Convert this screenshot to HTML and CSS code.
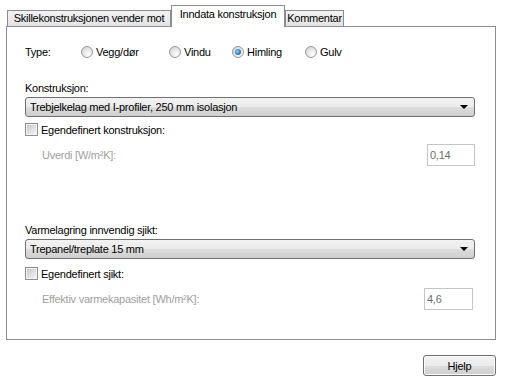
FILE: index.html
```html
<!DOCTYPE html>
<html lang="no">
<head>
    <meta charset="UTF-8">
    <title>Inndata konstruksjon</title>
    <link rel="stylesheet" href="styles.css">
</head>
<body>
    <div class="window">
        <!-- Faner -->
        <div class="tabs">
            <div class="tab tab-first">Skillekonstruksjonen vender mot</div>
            <div class="tab tab-active">Inndata konstruksjon</div>
            <div class="tab tab-last">Kommentar</div>
        </div>

        <div class="panel">
            <!-- Type -->
            <div class="type-row">
                <span class="type-label">Type:</span>
                <label class="radio r-vegg"><span class="radio-dot"></span>Vegg/dør</label>
                <label class="radio r-vindu"><span class="radio-dot"></span>Vindu</label>
                <label class="radio r-himling"><span class="radio-dot checked"></span>Himling</label>
                <label class="radio r-gulv"><span class="radio-dot"></span>Gulv</label>
            </div>

            <!-- Konstruksjon -->
            <div class="field-label first-label">Konstruksjon:</div>
            <div class="combo">
                <span>Trebjelkelag med I-profiler, 250 mm isolasjon</span>
                <span class="combo-arrow"></span>
            </div>
            <label class="check"><span class="check-box"></span>Egendefinert konstruksjon:</label>
            <div class="value-row">
                <span class="disabled-label">Uverdi [W/m²K]:</span>
                <span class="value-box value-u">0,14</span>
            </div>

            <!-- Varmelagring -->
            <div class="field-label second-label">Varmelagring innvendig sjikt:</div>
            <div class="combo">
                <span>Trepanel/treplate 15 mm</span>
                <span class="combo-arrow"></span>
            </div>
            <label class="check check-second"><span class="check-box"></span>Egendefinert sjikt:</label>
            <div class="value-row value-row-second">
                <span class="disabled-label">Effektiv varmekapasitet [Wh/m²K]:</span>
                <span class="value-box value-c">4,6</span>
            </div>
        </div>

        <div class="buttons">
            <button class="btn">Hjelp</button>
        </div>
    </div>
</body>
</html>
```

FILE: styles.css
```css
body {
    margin: 0;
    background-color: #ffffff;
    font-family: "Liberation Sans", Arial, sans-serif;
    font-size: 11px;
    letter-spacing: -0.25px;
    color: #000;
}
.window {
    padding: 5px 10px 0 6px;
    width: 490px;
}
.tabs {
    display: flex;
    align-items: flex-end;
    height: 21px;
    padding-left: 1px;
}
.tab {
    box-sizing: border-box;
    height: 16px;
    border: 1px solid #898c95;
    border-bottom: none;
    background: linear-gradient(#f3f3f3, #e3e3e3);
    text-align: center;
    line-height: 15px;
    white-space: nowrap;
}
.tab-first {
    width: 164px;
}
.tab-active {
    position: relative;
    z-index: 1;
    width: 114px;
    height: 22px;
    margin-bottom: -1px;
    background: #ffffff;
    line-height: 17px;
}
.tab-last {
    width: 59px;
}
.panel {
    box-sizing: border-box;
    height: 314px;
    border: 1px solid #898c95;
    padding: 18px 20px 0 18px;
    background: #ffffff;
}
.type-row {
    display: flex;
    align-items: center;
    height: 14px;
}
.type-label {
    width: 56px;
}
.radio {
    display: flex;
    align-items: center;
}
.r-vegg { width: 88px; }
.r-vindu { width: 63px; }
.r-himling { width: 73px; }
.radio-dot {
    box-sizing: border-box;
    width: 12px;
    height: 12px;
    margin-right: 3px;
    border-radius: 50%;
    border: 1px solid #9a9a9a;
    background: radial-gradient(circle at 65% 70%, #fafafa 10%, #d6d6d6 80%);
    display: flex;
    align-items: center;
    justify-content: center;
}
.radio-dot.checked::after {
    content: "";
    width: 6px;
    height: 6px;
    border-radius: 50%;
    background: radial-gradient(circle at 40% 40%, #8ad6ff 0%, #2d7fc4 55%, #163f73 100%);
}
.field-label {
    height: 13px;
    line-height: 13px;
}
.first-label {
    margin-top: 23px;
}
.second-label {
    margin-top: 58px;
}
.combo {
    box-sizing: border-box;
    height: 20px;
    margin-top: 2px;
    border: 1px solid #707070;
    border-radius: 3px;
    background: linear-gradient(#f2f2f2 0%, #ebebeb 50%, #dddddd 51%, #cfcfcf 100%);
    display: flex;
    align-items: center;
    justify-content: space-between;
    padding: 0 6px 0 4px;
}
.combo-arrow {
    width: 0;
    height: 0;
    border-left: 4px solid transparent;
    border-right: 4px solid transparent;
    border-top: 4px solid #000;
}
.check {
    display: flex;
    align-items: center;
    height: 13px;
    margin-top: 6px;
}
.check-second {
    margin-top: 8px;
}
.check-box {
    box-sizing: border-box;
    width: 13px;
    height: 13px;
    margin-right: 3px;
    border: 1px solid #8e8f8f;
    background: #f4f4f4;
    background-image: linear-gradient(135deg, #c4c8ce 0%, #f4f4f4 100%);
    background-size: 9px 9px;
    background-position: center;
    background-repeat: no-repeat;
}
.value-row {
    display: flex;
    align-items: center;
    justify-content: space-between;
    height: 22px;
    margin-top: 8px;
    padding-left: 17px;
}
.value-row-second {
    margin-top: 8px;
    margin-right: 2px;
}
.disabled-label {
    color: #a0a0a0;
}
.value-box {
    box-sizing: border-box;
    height: 22px;
    border: 1px solid #c3c6c9;
    color: #6d6d6d;
    padding: 0 2px;
    line-height: 20px;
}
.value-u { width: 48px; }
.value-c { width: 49px; }
.buttons {
    display: flex;
    justify-content: flex-end;
    margin-top: 15px;
}
.btn {
    box-sizing: border-box;
    width: 73px;
    height: 21px;
    font-family: "Liberation Sans", Arial, sans-serif;
    font-size: 11px;
    letter-spacing: -0.25px;
    color: #000;
    border: 1px solid #707070;
    border-radius: 3px;
    background: linear-gradient(#f2f2f2 0%, #ebebeb 50%, #dddddd 51%, #cfcfcf 100%);
    box-shadow: inset 0 0 0 1px #fbfbfb;
    padding: 0;
}
```
